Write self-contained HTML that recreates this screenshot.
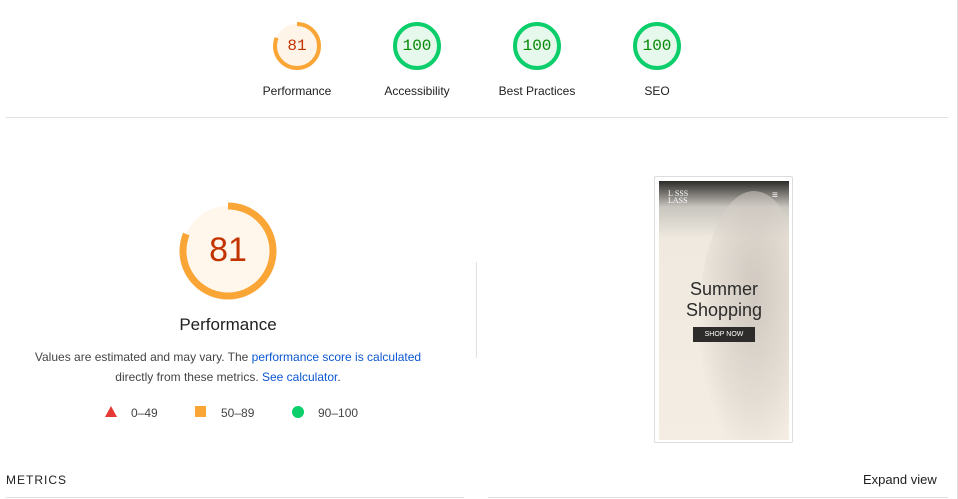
<!DOCTYPE html>
<html><head><meta charset="utf-8"><style>
body{margin:0;width:958px;height:499px;background:#fff;font-family:"Liberation Sans",sans-serif;position:relative;overflow:hidden;color:#212121}
.a{position:absolute}
.lbl{font-size:12px;color:#212121;text-align:center;width:120px}
.mono{font-family:"Liberation Mono",monospace}
</style></head><body>
<div class="a" style="left:957px;top:0;width:1px;height:499px;background:#e0e0e0"></div>
<svg class="a" style="left:0;top:0" width="958" height="499">
 <g transform="translate(297,46)">
  <circle r="22" fill="#fff4e8"/><circle r="22" fill="none" stroke="#faa637" stroke-width="4" stroke-dasharray="112 200" transform="rotate(-90)"/>
 </g>
 <g transform="translate(417,46)"><circle r="22" fill="#e6f7ec" stroke="#0cce6b" stroke-width="4"/></g>
 <g transform="translate(537,46)"><circle r="22" fill="#e6f7ec" stroke="#0cce6b" stroke-width="4"/></g>
 <g transform="translate(657,46)"><circle r="22" fill="#e6f7ec" stroke="#0cce6b" stroke-width="4"/></g>
 <g transform="translate(228,251)">
  <circle r="45" fill="#fff6ec"/><circle r="45" fill="none" stroke="#faa637" stroke-width="7" stroke-dasharray="229 300" transform="rotate(-90)"/>
 </g>
 <polygon points="111,406 117,417 105,417" fill="#e53935"/>
 <rect x="195" y="406" width="11" height="11" fill="#faa637"/>
 <circle cx="298" cy="412" r="6" fill="#0cce6b"/>
</svg>
<div class="a mono" style="left:277px;top:37px;width:40px;text-align:center;font-size:16px;color:#c33300">81</div>
<div class="a mono" style="left:397px;top:37px;width:40px;text-align:center;font-size:16px;color:#008800">100</div>
<div class="a mono" style="left:517px;top:37px;width:40px;text-align:center;font-size:16px;color:#008800">100</div>
<div class="a mono" style="left:637px;top:37px;width:40px;text-align:center;font-size:16px;color:#008800">100</div>
<div class="a lbl" style="left:237px;top:84px">Performance</div>
<div class="a lbl" style="left:357px;top:84px">Accessibility</div>
<div class="a lbl" style="left:477px;top:84px">Best Practices</div>
<div class="a lbl" style="left:597px;top:84px">SEO</div>
<div class="a" style="left:6px;top:117px;width:942px;height:1px;background:#e0e0e0"></div>
<div class="a" style="left:178px;top:231px;width:100px;text-align:center;font-size:34px;color:#c33300">81</div>
<div class="a" style="left:128px;top:315px;width:200px;text-align:center;font-size:17px">Performance</div>
<div class="a" style="left:20px;top:347px;width:416px;text-align:center;font-size:12px;line-height:20px;color:#444">Values are estimated and may vary. The <span style="color:#0b57d0">performance score is calculated</span><br>directly from these metrics. <span style="color:#0b57d0">See calculator</span>.</div>
<div class="a" style="left:131px;top:406px;font-size:12px;color:#444">0–49</div>
<div class="a" style="left:221px;top:406px;font-size:12px;color:#444">50–89</div>
<div class="a" style="left:318px;top:406px;font-size:12px;color:#444">90–100</div>
<div class="a" style="left:476px;top:262px;width:1px;height:96px;background:#e0e0e0"></div>
<div class="a" style="left:654px;top:176px;width:137px;height:265px;border:1px solid #ddd;border-radius:2px"></div>
<div class="a" style="left:659px;top:181px;width:130px;height:259px;background:linear-gradient(180deg,#2d2b28 0%,#c8c5bf 10%,#efe9df 22%,#f3ede3 100%);overflow:hidden">
 <div class="a" style="left:40px;top:10px;width:110px;height:260px;border-radius:50% 50% 0 0;background:radial-gradient(ellipse at 50% 40%,rgba(200,192,184,.8),rgba(215,208,200,.5) 50%,rgba(240,234,226,0) 75%)"></div>
 <div class="a" style="left:9px;top:9px;color:#fff;font-size:8px;font-family:'Liberation Serif',serif;line-height:7px">L&nbsp;SSS<br>LASS</div>
 <div class="a" style="left:113px;top:9px;color:#fff;font-size:10px">≡</div>
 <div class="a" style="left:0;top:98px;width:130px;text-align:center;font-size:18px;line-height:21px;color:#2b2b2b">Summer<br>Shopping</div>
 <div class="a" style="left:34px;top:146px;width:62px;height:15px;background:#2e2c2a;color:#fff;font-size:7px;text-align:center;line-height:15px">SHOP NOW</div>
</div>
<div class="a" style="left:6px;top:473px;font-size:12px;letter-spacing:1px;color:#212121">METRICS</div>
<div class="a" style="left:863px;top:472px;font-size:13px;color:#212121">Expand view</div>
<div class="a" style="left:6px;top:497px;width:458px;height:1px;background:#e0e0e0"></div>
<div class="a" style="left:488px;top:497px;width:460px;height:1px;background:#e0e0e0"></div>
</body></html>
